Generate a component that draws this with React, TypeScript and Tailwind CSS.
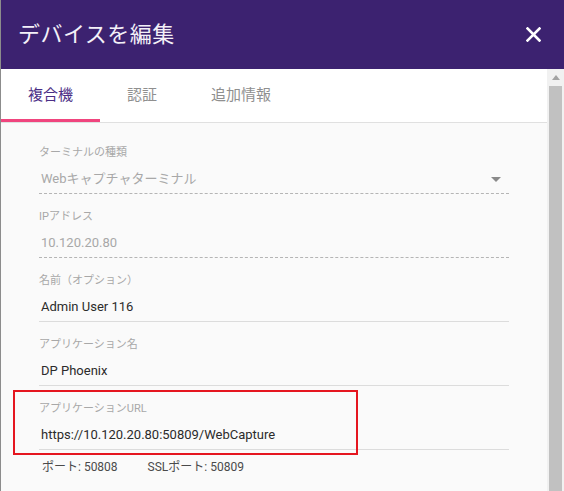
import React from 'react';

const font = { fontFamily: "Roboto, 'Noto Sans CJK JP', sans-serif" };

type FieldProps = {
    label: string;
    value: string;
    disabled?: boolean;
    select?: boolean;
};

const Field: React.FC<FieldProps> = ({ label, value, disabled, select }) => (
    <div
        className={`pt-[16px] pb-[4px] border-b ${
            disabled ? 'border-dashed border-[#b5b5b5]' : 'border-[#dcdcdc]'
        }`}
    >
        <div className="text-[11px] leading-[14px] text-[#a8a8a8]">{label}</div>
        <div className="mt-[9px] flex items-center justify-between pl-[2px] pr-[8px]">
            <span
                className={`text-[13px] leading-[20px] ${
                    disabled ? 'text-[#a8a8a8]' : 'text-[#2b2b2b]'
                }`}
            >
                {value}
            </span>
            {select && (
                <svg width="10" height="5" viewBox="0 0 10 5" className="mt-[1px]">
                    <path d="M0 0 L10 0 L5 5 Z" fill="#8a8a8a" />
                </svg>
            )}
        </div>
    </div>
);

export default function App() {
    return (
        <div className="w-[564px] h-[491px] overflow-hidden flex flex-col border-l border-[#8c8c8c] bg-[#fafafa]" style={font}>
            {/* header */}
            <div className="h-[69px] shrink-0 bg-[#3c2270] flex items-center justify-between pl-[17px] pr-[23px]">
                <h2 className="text-[22px] font-normal text-[#f3f0f8] tracking-[0.5px]">デバイスを編集</h2>
                <svg width="15" height="15" viewBox="0 0 15 15">
                    <path d="M1.5 1.5 L13.5 13.5 M13.5 1.5 L1.5 13.5" stroke="#ffffff" strokeWidth="2.6" strokeLinecap="square" />
                </svg>
            </div>

            <div className="flex flex-1 min-h-0">
                {/* body */}
                <div className="flex-1 flex flex-col">
                    <div className="h-[54px] bg-white border-b border-[#e0e0e0] flex">
                        <div className="relative flex items-center px-[27px] text-[15px] text-[#4b2e86]">
                            複合機
                            <div className="absolute left-0 right-0 bottom-0 h-[3px] bg-[#f0457e]" />
                        </div>
                        <div className="flex items-center px-[27px] text-[15px] text-[#8f8f8f]">認証</div>
                        <div className="flex items-center px-[27px] text-[15px] text-[#8f8f8f]">追加情報</div>
                    </div>

                    <div className="relative pt-[7px] pl-[38px] pr-[38px]">
                        <Field label="ターミナルの種類" value="Webキャプチャターミナル" disabled select />
                        <Field label="IPアドレス" value="10.120.20.80" disabled />
                        <Field label="名前（オプション）" value="Admin User 116" />
                        <Field label="アプリケーション名" value="DP Phoenix" />
                        <Field label="アプリケーションURL" value="https://10.120.20.80:50809/WebCapture" />
                        <div className="pt-[8px] pl-[3px] flex gap-[30px] text-[12px] leading-[18px] text-[#4a4a4a]">
                            <span>ポート: 50808</span>
                            <span>SSLポート: 50809</span>
                        </div>

                        <div className="absolute left-[12px] top-[267px] w-[345px] h-[65px] border-2 border-[#e5161f]" />
                    </div>
                </div>

                {/* scrollbar */}
                <div className="w-[17px] shrink-0 bg-[#f1f1f1] flex flex-col items-center">
                    <div className="h-[17px] flex items-center justify-center">
                        <svg width="8" height="5" viewBox="0 0 8 5">
                            <path d="M0 5 L4 0 L8 5 Z" fill="#a3a3a3" />
                        </svg>
                    </div>
                    <div className="w-[13px] flex-1 bg-[#c1c1c1]" />
                </div>
            </div>
        </div>
    );
}
